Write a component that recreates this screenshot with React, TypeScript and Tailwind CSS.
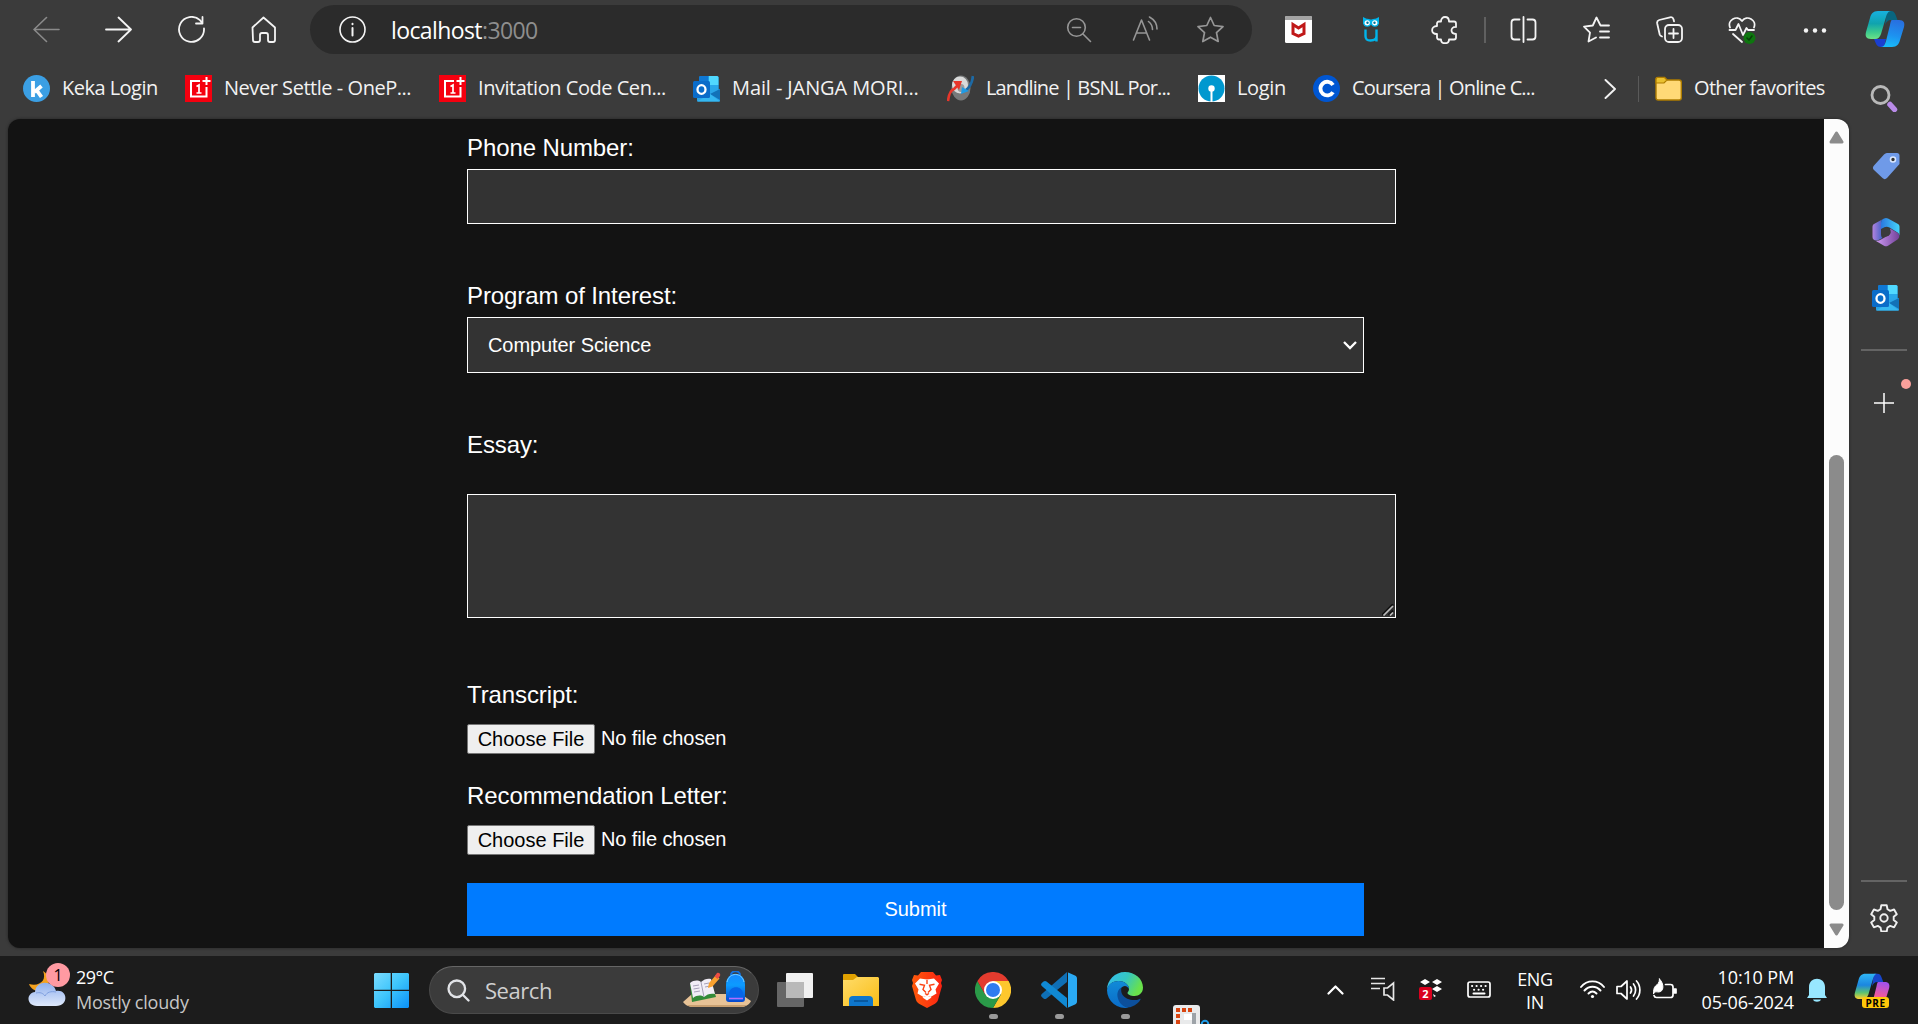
import React from "react";

const ui = "font-['Open_Sans','Noto_Sans',sans-serif]";
const line = { fill: "none", stroke: "currentColor", strokeLinecap: "round" as const, strokeLinejoin: "round" as const };

function OnePlus() {
  return (
    <svg className="size-[27px]" viewBox="0 0 27 27">
      <rect width="27" height="27" fill="#f5000f" />
      <path d="M15 6H6v15.500h15.500V12" fill="none" stroke="#fff" strokeWidth="2" />
      <path d="M21.500 2v8M17.500 6h8" fill="none" stroke="#fff" strokeWidth="2" />
      <path d="M11.500 11.500l2.500-1.500v8M11.500 18h5" fill="none" stroke="#fff" strokeWidth="1.700" />
    </svg>
  );
}

function Outlook() {
  return (
    <svg className="size-[27px]" viewBox="0 0 27 27">
      <path d="M6 2.500Q6 1 7.500 1H24q1.500 0 1.500 1.500V15H6z" fill="#1490df" />
      <path d="M15.500 1H24q1.500 0 1.500 1.500V10h-10z" fill="#50d9ff" />
      <path d="M6 2.500Q6 1 7.500 1h8v9H6z" fill="#0f78d4" />
      <path d="M15.500 10h10v6h-10z" fill="#28a8ea" />
      <path d="M4 18l23-4v11.500q0 1-1 1H5q-1 0-1-1z" fill="#2aa5e8" />
      <path d="M27 14v11L17 19z" fill="#1272b8" />
      <path d="M4 26.500L17 19l10 7.500z" fill="#35b8f1" />
      <rect y="6" width="17" height="17" rx="1.500" fill="#0a6cc9" />
      <ellipse cx="8.500" cy="14.500" rx="4" ry="4.300" fill="none" stroke="#fff" strokeWidth="2.300" />
    </svg>
  );
}

function Keka() {
  return (
    <svg className="size-[27px]" viewBox="0 0 27 27">
      <circle cx="13.500" cy="13.500" r="13.500" fill="#3b9fe4" />
      <path d="M10 6v16M18.500 11l-7 6M13.500 15l5 7" fill="none" stroke="#fff" strokeWidth="3.800" />
    </svg>
  );
}

function Landline() {
  return (
    <svg className="size-[27px]" viewBox="0 0 27 27">
      <ellipse cx="14" cy="13" rx="9.500" ry="12.500" fill="#77797a" />
      <ellipse cx="13" cy="10" rx="8" ry="8.500" fill="#d9dada" />
      <ellipse cx="14" cy="13" rx="3.500" ry="4" fill="#9a9c9d" />
      <path d="M1 26c1-8 3-11 6-12l4-4" fill="none" stroke="#e8362b" strokeWidth="2.600" />
      <path d="M6 6l9 0-3 9z" fill="#e8362b" />
      <path d="M26 1c-1 8-3 11-7 14" fill="none" stroke="#1d6aa5" strokeWidth="2.800" />
      <path d="M15 12l-1 7 8-3z" fill="#1e9be6" />
    </svg>
  );
}

function Sbi() {
  return (
    <svg className="size-[27px]" viewBox="0 0 27 27">
      <rect width="27" height="27" fill="#fff" />
      <circle cx="13.500" cy="13.500" r="13" fill="#0098cf" />
      <circle cx="13.500" cy="13.500" r="3.200" fill="#fff" />
      <path d="M12.500 15h2v12h-2z" fill="#fff" />
    </svg>
  );
}

function Coursera() {
  return (
    <svg className="size-[27px]" viewBox="0 0 27 27">
      <circle cx="13.500" cy="13.500" r="13.500" fill="#0056d2" />
      <path d="M20 10a6.800 6.800 0 1 0 0 7.200" fill="none" stroke="#fff" strokeWidth="3.900" />
    </svg>
  );
}

function CopilotMark({ pre = false }: { pre?: boolean }) {
  const id = pre ? "p" : "c";
  return (
    <svg className={pre ? "size-[36px]" : "size-[40px]"} viewBox="0 0 40 40">
      <defs>
        <linearGradient id={id + "a"} x1="0" y1="0" x2="0" y2="1">
          <stop offset="0" stopColor={pre ? "#2fb6f5" : "#17b1e0"} />
          <stop offset="0.450" stopColor={pre ? "#1b86e0" : "#10a3ae"} />
          <stop offset="0.750" stopColor={pre ? "#5cc271" : "#3bc98f"} />
          <stop offset="1" stopColor={pre ? "#ffd02e" : "#6be387"} />
        </linearGradient>
        <linearGradient id={id + "b"} x1="0.500" y1="0" x2="0.300" y2="1">
          <stop offset="0" stopColor={pre ? "#a452ea" : "#2870e0"} />
          <stop offset="0.550" stopColor={pre ? "#f0589c" : "#1d92f0"} />
          <stop offset="1" stopColor={pre ? "#ff9a5a" : "#18bdfa"} />
        </linearGradient>
      </defs>
      <path d="M22 2h4c3 0 4 2 5 5l1.500 4H26c-3 0-5 2-6 5z" fill={pre ? "#1745c9" : "#08657f"} />
      <path d="M9 30h12l-2 8h-3c-4 0-5-3-7-8z" fill={pre ? "#e69c21" : "#1a3fd0"} />
      <path d="M13 2h13c-3 0-4 3-5 6l-5 17c-1 3-3 5-6 5H6c-5 0-6-3-5-7L5 9c1-4 3-7 8-7z" fill={"url(#" + id + "a)"} />
      <path d="M27 11h7c5 0 6 3 5 7l-4 13c-1 4-3 7-8 7H16c3 0 4-3 5-6l4-16c.500-3 1-5 2-5z" fill={"url(#" + id + "b)"} />
    </svg>
  );
}

function Bookmark({ icon, text, w, track }: { icon: React.ReactNode; text: string; w: string; track: string }) {
  return (
    <div className={"flex shrink-0 items-center gap-[12px] " + w}>
      {icon}
      <span className={"whitespace-nowrap pb-px text-[20px] leading-[28px] " + track}>{text}</span>
    </div>
  );
}

function Toolbar() {
  return (
    <div className="flex h-[59px] shrink-0 items-center text-[#f4f4f4]">
      <svg className="ml-[33px] size-[27px] shrink-0 text-[#8a8a8a]" viewBox="0 0 27 27" {...line} strokeWidth="1.600"><path d="M26 13.500H1M13.500 1.500L1 13.500l12.500 12" /></svg>
      <svg className="ml-[45px] size-[27px] shrink-0" viewBox="0 0 27 27" {...line} strokeWidth="1.800"><path d="M1 13.500h25M13.500 1.500L26 13.500l-12.500 12" /></svg>
      <svg className="ml-[46px] size-[27px] shrink-0" viewBox="0 0 27 27" {...line} strokeWidth="1.800"><path d="M26 12.500A12.500 12.500 0 1 1 22 4.200l2 2.500M24.500 1v6.500H18" /></svg>
      <svg className="ml-[45px] size-[27px] shrink-0" viewBox="0 0 27 27" {...line} strokeWidth="1.800"><path d="M2.500 11.500L13.500 1.500l11.500 10V24c0 1.200-.8 2-2 2h-3c-1.200 0-2-.8-2-2v-5c0-1.200-.8-2-2-2h-4c-1.200 0-2 .8-2 2v5c0 1.200-.8 2-2 2h-3c-1.200 0-2-.8-2-2z" /></svg>
      <div className="ml-[33px] flex h-[49px] w-[942px] shrink-0 items-center rounded-full bg-[#2b2b2b]">
        <svg className="ml-[29px] size-[27px] shrink-0" viewBox="0 0 27 27" {...line} strokeWidth="1.600"><circle cx="13.500" cy="13.500" r="12.500" /><path d="M13.500 12v7.500M13.500 7.800v.4" strokeWidth="2" /></svg>
        <div className="ml-[25px] w-[200px] whitespace-nowrap text-[23px] leading-[30px] tracking-[-0.600px] text-white">localhost<span className="text-[#8e8e8e]">:3000</span></div>
        <svg className="ml-[475px] size-[26px] shrink-0 text-[#969696]" viewBox="0 0 26 26" {...line} strokeWidth="1.600"><circle cx="10.500" cy="10.500" r="8.800" /><path d="M17 17l7.500 7.500M6.500 10.500h8" /></svg>
        <svg className="ml-[40px] size-[27px] shrink-0 text-[#969696]" viewBox="0 0 27 27" {...line} strokeWidth="1.600"><path d="M1.500 24L9.500 4l8 20M4.500 17h10M16.500 5.500c2.500 2 4 5 4 8M17.500 1c4.500 2.500 7.500 7 7.500 12" /></svg>
        <svg className="ml-[38px] size-[27px] shrink-0 text-[#969696]" viewBox="0 0 27 27" {...line} strokeWidth="1.700"><path d="M13.500 1.500l3.700 8 8.800 1.100-6.500 6 1.700 8.900-7.700-4.300-7.700 4.300 1.700-8.900-6.500-6 8.800-1.100z" /></svg>
      </div>
      <svg className="ml-[33px] size-[27px] shrink-0" viewBox="0 0 27 27"><rect width="27" height="27" rx="1.500" fill="#fff" /><path d="M0 1.500Q0 0 1.500 0h24Q27 0 27 1.500V4H0z" fill="#a3a3a3" /><path d="M8 8.500l5.500 3.500L19 8.500v9L13.500 20 8 17.500z" fill="none" stroke="#c01818" strokeWidth="3" /></svg>
      <svg className="ml-[49px] h-[27px] w-5 shrink-0" viewBox="0 0 20 27"><path d="M2 1l5 2.500h6L18 1v7H2z" fill="#00b4ea" /><g fill="#fff" stroke="#00b4ea" strokeWidth="1.300"><circle cx="6.200" cy="6.800" r="3.300" /><circle cx="13.800" cy="6.800" r="3.300" /></g><circle cx="6.500" cy="6.800" r="1.200" fill="#00749c" /><circle cx="13.500" cy="6.800" r="1.200" fill="#00749c" /><path d="M4.500 13.500V20c0 4 2 4.500 5 4.500s6-1 6-4.500v-6.500M15.500 20v5.500" fill="none" stroke="#00b4ea" strokeWidth="2.400" /></svg>
      <svg className="ml-[49px] size-[28px] shrink-0" viewBox="0 0 28 28" {...line} strokeWidth="1.800"><path d="M9 5.500h2c0-6 8-6 8 0h5c1 0 2 .7 2 2V11c-6-.5-6 7 0 7v3.500c0 1-.7 2-2 2h-5c0 5-8 5-8 0H9c-1.300 0-2-1-2-2V18c-6.500.5-6.500-8 0-8V7.500c0-1.300.7-2 2-2z" /></svg>
      <div className="ml-[26px] h-[26px] w-[2px] shrink-0 bg-[#606060]" />
      <svg className="ml-[24px] size-[27px] shrink-0" viewBox="0 0 27 27" {...line} strokeWidth="1.800"><path d="M13.500 1v25M9.500 3.500h-5c-2 0-3 1-3 3v14c0 2 1 3 3 3h5M17.500 3.500h5c2 0 3 1 3 3v14c0 2-1 3-3 3h-5" /></svg>
      <svg className="ml-[46px] size-[27px] shrink-0" viewBox="0 0 27 27" {...line} strokeWidth="1.800"><path d="M26 9.500h-8.500L13.500 1.500l-3.700 8L1 10.600l6 6L5.500 25.500l7.500-4M17 15.500h9M17 21.500h9" /></svg>
      <svg className="ml-[46px] size-[27px] shrink-0" viewBox="0 0 27 27" {...line} strokeWidth="1.800"><rect x="9" y="9" width="17" height="17" rx="4" /><path d="M17.500 13v9M13 17.500h9M6 20.500c-1.500-.5-2-1-2.300-2L1.200 7.500c-.4-2 .3-3 2-3.500L14 1.300c1.800-.4 3 .2 3.500 2l.5 2" /></svg>
      <svg className="ml-[45px] size-[28px] shrink-0" viewBox="0 0 28 28" {...line} strokeWidth="1.800"><path d="M2 11.500C-1 4 9-1.500 14 5c5-6.500 15-1 12 6.500M1.500 14h6l3-6 4.500 11 3.500-7 1.500 2h6M5 18l9 8" /><circle cx="21.500" cy="22" r="6" fill="#0e760f" stroke="none" /><path d="M19 22l2 2 3-4" stroke="#083f08" strokeWidth="1.500" /></svg>
      <svg className="ml-[47px] size-[24px] shrink-0" viewBox="0 0 24 24" fill="currentColor"><circle cx="3" cy="12.500" r="2.200" /><circle cx="12" cy="12.500" r="2.200" /><circle cx="21" cy="12.500" r="2.200" /></svg>
    </div>
  );
}

function Bookmarks() {
  return (
    <div className="flex h-[59px] shrink-0 items-center pl-[23px] text-[#f2f2f2]">
      <Bookmark icon={<Keka />} text="Keka Login" w="w-[162px]" track="tracking-[-0.520px]" />
      <Bookmark icon={<OnePlus />} text="Never Settle - OneP..." w="w-[254px]" track="tracking-[-0.460px]" />
      <Bookmark icon={<OnePlus />} text="Invitation Code Cen..." w="w-[254px]" track="tracking-[-0.460px]" />
      <Bookmark icon={<Outlook />} text="Mail - JANGA MORI..." w="w-[254px]" track="tracking-[-0.100px]" />
      <Bookmark icon={<Landline />} text="Landline | BSNL Por..." w="w-[251px]" track="tracking-[-0.880px]" />
      <Bookmark icon={<Sbi />} text="Login" w="w-[115px]" track="tracking-[-0.350px]" />
      <Bookmark icon={<Coursera />} text="Coursera | Online C..." w="w-[291px]" track="tracking-[-0.860px]" />
      <svg className="h-5 w-3 shrink-0" viewBox="0 0 12 20" {...line} strokeWidth="1.900"><path d="M1.500 1L11 10l-9.500 9" /></svg>
      <div className="ml-[22px] h-[26px] w-px shrink-0 bg-[#5a5a5a]" />
      <div className="ml-[16px] flex items-center gap-[12px]">
        <svg className="size-[27px]" viewBox="0 0 27 27"><path d="M1 4.500C1 3 1.800 2.500 3 2.500h6.500L12 5h12c1.500 0 2.300.8 2.300 2.300v15.400c0 1.500-.8 2.300-2.300 2.300H3.300C1.800 25 1 24.200 1 22.700z" fill="#ffd976" stroke="#ae7c00" strokeWidth="1.400" /><path d="M1 4.500C1 3 1.800 2.500 3 2.500h6.500L12 5 9 8H1z" fill="#eac130" stroke="#ae7c00" strokeWidth="1.200" /></svg>
        <span className="whitespace-nowrap pb-px text-[20px] leading-[28px] tracking-[-0.660px]">Other favorites</span>
      </div>
    </div>
  );
}

function Label({ children, className }: { children: React.ReactNode; className: string }) {
  return <label className={"block text-[24px] leading-[28px] tracking-[-0.100px] text-white " + className}>{children}</label>;
}

function FileRow({ className }: { className: string }) {
  return (
    <div className={"flex h-[30px] items-center text-[20px] leading-[24px] text-white " + className}>
      <button className="flex h-[30px] w-[128px] items-center justify-center rounded-[2px] border border-[#767676] bg-[#efefef] pb-px text-black">Choose File</button>
      <span className="ml-[6px] pb-[3px] tracking-[-0.100px]">No file chosen</span>
    </div>
  );
}

function Form() {
  return (
    <form className="ml-[459px] w-[929px] font-['Liberation_Sans',Arial,sans-serif]">
      <Label className="mt-[15px]">Phone Number:</Label>
      <div className="mt-[7px] h-[55px] border border-white bg-[#333]" />
      <Label className="mt-[58px]">Program of Interest:</Label>
      <div className="mt-[7px] flex h-[56px] w-[897px] items-center justify-between border border-white bg-[#333] pr-[6px] pl-[20px] text-[20px] tracking-[-0.080px] text-white">
        Computer Science
        <svg className="h-[9px] w-[14px]" viewBox="0 0 14 9" fill="none" stroke="#fff" strokeWidth="2.300"><path d="M1 1l6 6 6-6" /></svg>
      </div>
      <Label className="mt-[58px]">Essay:</Label>
      <div className="mt-[35px] flex h-[124px] items-end justify-end border border-white bg-[#333] p-px">
        <svg className="size-[12px]" viewBox="0 0 12 12" fill="none"><path d="M0 11L11 0M6.500 11L11 6.500" stroke="#111" strokeWidth="1.800" /><path d="M1.500 11.500L11 2M8 11.500l3-3" stroke="#bbb" strokeWidth="1.700" /></svg>
      </div>
      <Label className="mt-[63px]">Transcript:</Label>
      <FileRow className="mt-[15px]" />
      <Label className="mt-[28px]">Recommendation Letter:</Label>
      <FileRow className="mt-[15px]" />
      <button className="mt-[28px] flex h-[53px] w-[897px] items-center justify-center bg-[#007bff] pb-px text-[20px] text-white">Submit</button>
    </form>
  );
}

function Sidebar() {
  return (
    <div className="flex h-[956px] w-[69px] flex-col items-center pl-[2px]">
      <div className="mt-[9px] h-10"><CopilotMark /></div>
      <svg className="mt-[35px] mr-px size-[28px]" viewBox="0 0 28 28"><circle cx="10.500" cy="11" r="8.500" fill="none" stroke="#b9b9b9" strokeWidth="2.800" /><path d="M20 20.500l4.500 5" stroke="#b98be8" strokeWidth="5.500" strokeLinecap="round" /></svg>
      <svg className="mt-[40px] ml-[2px] size-[28px]" viewBox="0 0 28 28"><path d="M16 1h9c1.500 0 2.500 1 2.500 2.500V12L15 26c-1.500 1.500-3 1.500-4.500 0L2 18c-1.500-1.500-1.500-3 0-4.500L12 2.500C13.500 1 14.500 1 16 1z" fill="#6f9ae8" /><circle cx="21" cy="7.500" r="2.500" fill="#333" stroke="#dbe8ff" strokeWidth="1.600" /></svg>
      <svg className="mt-[37px] ml-[2px] size-[30px]" viewBox="0 0 30 30">
        <defs>
          <linearGradient id="m1"><stop stopColor="#b283df" /><stop offset="1" stopColor="#315cc4" /></linearGradient>
          <linearGradient id="m2"><stop stopColor="#2b78e0" /><stop offset="1" stopColor="#44d5fb" /></linearGradient>
          <linearGradient id="m3"><stop stopColor="#ce9bf4" /><stop offset="1" stopColor="#734199" /></linearGradient>
        </defs>
        <path d="M13 1.500L3 7c-1 .6-1.500 1.500-1.500 3v10c0 3 3 4.500 6 3l4-2c-1-1-1.500-2-1.500-4V6c0-2 1-4 3-4.500z" fill="url(#m1)" />
        <path d="M13 1.500c1.500-.8 2.500-.8 4 0L27 7c1 .6 1.500 1.500 1.500 3v9c0-1.500-1-3-2-3.500l-8-5c-2-1.200-4-1-5.500 0L10 12V6c0-2 1-4 3-4.500z" fill="url(#m2)" />
        <path d="M5 24c2 0 4-1 6-2l7-4c2-1 2-3 1-6.500l7 4c3 2 3 5 .5 7L17 28.700c-1.500.8-2.500.8-4 0z" fill="url(#m3)" />
        <circle cx="14.800" cy="15" r="4.500" fill="#3b3b3b" />
      </svg>
      <div className="mt-[37px] ml-[2px]"><Outlook /></div>
      <div className="mt-[38px] mr-[2px] h-[2px] w-[46px] bg-[#646464]" />
      <div className="relative mt-[41px] mr-[2px] size-[22px]">
        <svg className="size-[22px]" viewBox="0 0 22 22" stroke="#fff" strokeWidth="1.500"><path d="M11 1v20M1 11h20" /></svg>
        <span className="absolute top-[-13px] left-[28px] size-[10px] rounded-full bg-[#fba09b]" />
      </div>
      <div className="mt-auto mr-[2px] h-[2px] w-[46px] bg-[#646464]" />
      <svg className="mt-[22px] mr-px mb-[24px] size-[28px] text-[#f0f0f0]" viewBox="0 0 28 28" {...line} strokeWidth="1.900"><circle cx="14" cy="14" r="3.700" /><path d="M11.300 1.300h5.400l.8 4 2.700 1.600 3.900-1.400 2.700 4.700-3.100 2.600v3.200l3.100 2.600-2.700 4.700-3.900-1.400-2.700 1.600-.8 4h-5.400l-.8-4-2.700-1.600-3.900 1.400-2.700-4.700 3.100-2.600v-3.200l-3.100-2.600 2.700-4.700 3.900 1.400 2.700-1.600z" /></svg>
    </div>
  );
}

function Scrollbar() {
  return (
    <div className="flex h-[829px] w-[25px] flex-col items-center bg-[#fcfcfc]">
      <svg className="mt-[12px] h-[13px] w-[15px] shrink-0" viewBox="0 0 15 13"><path d="M7.500 2L13 11H2z" fill="#8b8b8b" stroke="#8b8b8b" strokeWidth="3" strokeLinejoin="round" /></svg>
      <div className="mt-[311px] h-[455px] w-[15px] rounded-full bg-[#8b8b8b]" />
      <svg className="mt-[13px] h-[13px] w-[15px] shrink-0" viewBox="0 0 15 13"><path d="M7.500 11L13 2H2z" fill="#8b8b8b" stroke="#8b8b8b" strokeWidth="3" strokeLinejoin="round" /></svg>
    </div>
  );
}

function AppIcon({ children, className, running }: { children: React.ReactNode; className: string; running?: boolean }) {
  return (
    <div className={"relative size-[36px] shrink-0 " + className}>
      {children}
      {running && <span className="absolute top-[42px] left-[14px] h-[5px] w-[9px] rounded-full bg-[#9a9a9a]" />}
    </div>
  );
}

function SearchArt() {
  return (
    <svg className="h-[38px] w-[68px] shrink-0" viewBox="0 0 68 38">
      <defs><linearGradient id="bag" x1="0" y1="0" x2="0" y2="1"><stop stopColor="#1789ff" /><stop offset="0.400" stopColor="#0c9bff" /><stop offset="1" stopColor="#0647cf" /></linearGradient></defs>
      <path d="M0 31l9-8h49l10 7c-2 4-6 6-11 6H11c-5 0-9-2-11-5z" fill="#e7c296" />
      <path d="M4 34h60c-2 1.500-4 2-7 2H11c-3 0-5-.5-7-2z" fill="#c89f70" />
      <path d="M7 13l2 18 24-5-5-16z" fill="#338b38" />
      <path d="M7 12c4-3 8-3 11-1 3-3 7-4 10-3l4 15c-4-1-8 0-11 3-3-2-7-2-11 1z" fill="#f1edf6" />
      <path d="M18 11l3 15M10 15l6-1M10.500 18l6-1M11 21l6-1M21 13l5-1M22 16l5-1" stroke="#a6a0b8" strokeWidth="1" fill="none" />
      <path d="M25 17l1-5 7-8 3.500 3.500-7 8z" fill="#f9a12e" /><path d="M31.500 5.500L34 2c2-1 4 1 3 3l-2.500 3z" fill="#ed4d43" />
      <path d="M48 4c0-5 9-5 9 0" fill="none" stroke="#1271e0" strokeWidth="2" />
      <path d="M43 14c0-15 19-15 19 0v14c0 2-1 3-3 3H46c-2 0-3-1-3-3z" fill="url(#bag)" />
      <path d="M44 11c2-10 15-10 17 0" fill="none" stroke="#7ad2ff" strokeWidth="1" />
      <path d="M46 29v-6c0-9 14-9 14 0v6z" fill="#0865e8" /><path d="M46 27.500h14" stroke="#b56cff" strokeWidth="1.500" />
    </svg>
  );
}

function Taskbar() {
  return (
    <div className="flex h-[68px] items-start bg-[#1c1c1c] text-white">
      <div className="relative mt-[13px] ml-[28px] h-[40px] w-[42px] shrink-0">
        <svg className="h-[40px] w-[42px]" viewBox="0 0 42 40">
          <defs><linearGradient id="cl" x1="0" y1="0" x2="0" y2="1"><stop stopColor="#8fb0ee" /><stop offset="1" stopColor="#dfe9fb" /></linearGradient></defs>
          <path d="M15 2c4 9-3 16-14 13 3 8 12 9 17 4s3-14-3-17z" fill="#f4a21f" />
          <path d="M9 37c-11 0-11-13-2-14 1-12 18-12 21-1 12-2 13 15 0 15z" fill="url(#cl)" />
          <path d="M8 24c4-1 7 0 9 3 2-4 6-5 11-4" fill="none" stroke="#7f9fe0" strokeWidth="1" />
        </svg>
        <span className="absolute top-[-6px] left-[18px] flex size-[24px] items-center justify-center rounded-full bg-[#ff9aa2] text-[16px] leading-none text-black">1</span>
      </div>
      <div className="ml-[6px] w-[230px] shrink-0 pt-[9px] text-[18px] leading-[24.500px]">
        <div className="tracking-[-0.500px]">29°C</div>
        <div className="tracking-[-0.200px] text-[#c6c6c6]">Mostly cloudy</div>
      </div>
      <svg className="mt-[17px] ml-[68px] size-[35px] shrink-0" viewBox="0 0 35 35">
        <defs><linearGradient id="win" x1="0" y1="0" x2="1" y2="1"><stop stopColor="#7bdcff" /><stop offset="0.500" stopColor="#3cc4fb" /><stop offset="1" stopColor="#0a90f8" /></linearGradient></defs>
        <path d="M1 0h15.700v16.700H0V1zM18 0h16l1 1v15.700H18zM0 18h16.700v17H1l-1-1zM18 18h17v16l-1 1H18z" fill="url(#win)" />
      </svg>
      <div className="mt-[10px] ml-[20px] flex h-[48px] w-[330px] shrink-0 items-center rounded-full border border-[#4a4a4a] border-t-[#666] bg-[#3b3b3b]">
        <svg className="ml-[17px] size-[23px] shrink-0" viewBox="0 0 23 23" fill="none" stroke="#e2e4e8" strokeWidth="2.300" strokeLinecap="round"><circle cx="9.800" cy="9.800" r="8.300" fill="#565656" /><path d="M16 16l5.500 5.500" /></svg>
        <span className="ml-[15px] w-[198px] text-[22px] leading-[30px] tracking-[-0.450px] text-[#cfcfcf]">Search</span>
        <SearchArt />
      </div>
      <AppIcon className="mt-[16px] ml-[18px]">
        <svg className="size-[36px]" viewBox="0 0 36 36"><rect x="9" y="1" width="27" height="25" rx="1" fill="#f0f0f0" /><rect y="10" width="27" height="25" rx="1" fill="#666" /><path d="M9 10h18v16H9z" fill="#b9b9b9" /></svg>
      </AppIcon>
      <AppIcon className="mt-[16px] ml-[30px]">
        <svg className="size-[36px]" viewBox="0 0 36 36">
          <defs><linearGradient id="fo" x1="0" y1="0" x2="1" y2="1"><stop stopColor="#ffdc6a" /><stop offset="1" stopColor="#f9bd16" /></linearGradient></defs>
          <path d="M0 3q0-1 1-1h11l3 3v5H0z" fill="#e0a100" /><path d="M0 8h10l4-3h21l1 1v28H0z" fill="url(#fo)" /><path d="M6 34v-6q0-4 4-4h16q4 0 4 4v6z" fill="#0e76cc" /><path d="M11 29h14" stroke="#064f91" strokeWidth="1.500" />
        </svg>
      </AppIcon>
      <AppIcon className="mt-[16px] ml-[30px]">
        <svg className="size-[36px]" viewBox="0 0 36 36">
          <defs><linearGradient id="br"><stop stopColor="#ff5a0b" /><stop offset="1" stopColor="#fb2312" /></linearGradient></defs>
          <path d="M12 0h12l3 3.500 4-.5 2 5-1 3 1 3-4 14c-.5 2-2 3-3 3.700L18 36l-8-4.300c-1-.7-2.500-1.700-3-3.700L3 14l1-3-1-3 2-5 4 .5z" fill="url(#br)" />
          <path d="M11 6.500l7 1 7-1 5 5-3.500 6 1 4-6 3.500-3.500-1.500-3.500 1.500-6-3.500 1-4L6 11.500z" fill="#fff" />
          <path d="M10.500 12.300l5 1-1.500 4.200 3 3M25.500 12.300l-5 1 1.500 4.200-3 3M18 8v4M16 21.500l2 1.200 2-1.200" fill="none" stroke="#fb4212" strokeWidth="1.400" />
          <path d="M13.500 25.500l4.500-2 4.500 2-4.500 3z" fill="#fff" />
        </svg>
      </AppIcon>
      <AppIcon className="mt-[16px] ml-[30px]" running>
        <svg className="size-[36px]" viewBox="0 0 36 36">
          <path d="M18 9h15.600A18 18 0 0 1 18 36l7.800-13.500z" fill="#fdc72d" />
          <path d="M2.400 9l7.800 13.500L25.800 22.500 18 36A18 18 0 0 1 2.400 9z" fill="#2a9a48" />
          <path d="M33.600 9H18l-7.800 13.500L2.400 9a18 18 0 0 1 31.200 0z" fill="#e33b2e" />
          <circle cx="18" cy="18" r="9" fill="#fff" /><circle cx="18" cy="18" r="7" fill="#2f7cf0" />
        </svg>
      </AppIcon>
      <AppIcon className="mt-[16px] ml-[30px]" running>
        <svg className="size-[36px]" viewBox="0 0 36 36">
          <path d="M26 0v10L5.500 26.500c-1 .8-2 .7-3 0L.8 25c-1-1-1-2 0-3z" fill="#0f6fb5" />
          <path d="M26 36V26L5.500 9.500c-1-.8-2-.7-3 0L.8 11c-1 1-1 2 0 3z" fill="#1089d3" />
          <path d="M26 0l8 3.500c1.300.6 2 1.500 2 3v23c0 1.500-.7 2.400-2 3L26 36c1 0 1-.7 1-1.500V2c0-1 0-2-1-2z" fill="#2aa9f3" />
        </svg>
      </AppIcon>
      <AppIcon className="mt-[16px] ml-[30px]" running>
        <svg className="size-[36px]" viewBox="0 0 36 36">
          <defs>
            <linearGradient id="e1" x1="0" y1="0" x2="1" y2="0.400"><stop stopColor="#34bdf5" /><stop offset="0.550" stopColor="#35c6c0" /><stop offset="1" stopColor="#69e14b" /></linearGradient>
            <linearGradient id="e2" x1="0" y1="0" x2="0" y2="1"><stop stopColor="#118bd8" /><stop offset="1" stopColor="#0a6bc8" /></linearGradient>
          </defs>
          <path d="M18 0c10 0 18 7 18 15.500 0 5.500-4 8.500-8.500 8.500-4 0-7-1.500-7-3 0-1 1.500-1.500 1.500-4 0-4.500-5-8-10.500-8C5 9 1 13 0 18 0 8 8 0 18 0z" fill="url(#e1)" />
          <path d="M0 18C1 12 6 9 11.500 9 17 9 22 12.500 22 17c0 0-1.500-3-4-3-3.500 0-6 4-6 9 0 6 4 12 10 12.500A18 18 0 0 1 0 18z" fill="url(#e2)" />
          <path d="M14.500 15.500c-4 2-5 7-3.500 11C13 34 20 37 25 34.500c4-1.500 7-4 8.500-7 .3-.8-.3-1-1-.6-5 2.600-14 1-17.500-5-1-2-1-4.500-.5-6.400z" fill="#0c4f9b" />
        </svg>
      </AppIcon>
      <svg className="mt-[49px] ml-[30px] h-[19px] w-[37px] shrink-0" viewBox="0 0 37 19"><path d="M0 19V3q0-3 3-3h21q3 0 3 3v16z" fill="#e9eaeb" /><path d="M3 3h4v4H3zM9 3h4v4H9zM15 3h4v4h-4zM3 9h4v4H3zM3 15h4v4H3z" fill="#d9440f" /><path d="M11 9h8v6h-8z" fill="#fff" /><path d="M19 8h4v11h-4z" fill="#9da3a8" /><circle cx="32" cy="19" r="3.300" fill="none" stroke="#1e9ce8" strokeWidth="2" /></svg>
      <svg className="mt-[28px] ml-[117px] h-[11px] w-[17px] shrink-0" viewBox="0 0 17 11" {...line} strokeWidth="2.200"><path d="M1.500 9.500l7-7 7 7" /></svg>
      <svg className="mt-[21px] ml-[27px] size-[24px] shrink-0" viewBox="0 0 24 24" fill="none" stroke="#e6e6e6" strokeWidth="1.700"><path d="M0 1.500h14M0 6.500h14M0 11.500h9M13 11h3.500l6-5v17l-6-5H13z" /></svg>
      <svg className="mt-[22px] ml-[24px] size-[24px] shrink-0" viewBox="0 0 24 24"><path d="M1 4l5-3 5 3-5 3zM13 4l5-3 5 3-5 3zM13 11l5-3 5 3-5 3zM14 16l3 2-2 1z" fill="#fff" /><rect y="9" width="13" height="13" rx="2" fill="#d9001e" /><text x="6.500" y="19.800" fill="#fff" fontSize="11" fontWeight="700" textAnchor="middle">2</text></svg>
      <svg className="mt-[25px] ml-[24px] h-[17px] w-[24px] shrink-0" viewBox="0 0 24 17" {...line} strokeWidth="1.700"><rect x="1" y="1" width="22" height="15" rx="2" /><path d="M5 5h.2M9.500 5h.2M14 5h.2M18.500 5h.2M7 8.700h.2M11.500 8.700h.2M16 8.700h.2M6.500 12.500h11" strokeWidth="2" /></svg>
      <div className="ml-[20px] w-[48px] shrink-0 pt-[12px] text-center text-[18px] leading-[23px] tracking-[-0.400px]">ENG<br />IN</div>
      <svg className="mt-[24px] ml-[21px] h-[19px] w-[25px] shrink-0" viewBox="0 0 25 19" {...line} strokeWidth="1.900"><path d="M1 7c6-7.500 17-7.500 23 0M4.500 10.500c4.500-5 11.500-5 16 0M8.500 13.500c2.500-2.500 5.500-2.500 8 0" /><circle cx="12.500" cy="16.500" r="1.600" fill="#fff" stroke="none" /></svg>
      <svg className="mt-[23px] ml-[11px] h-[22px] w-[25px] shrink-0" viewBox="0 0 25 22" {...line} strokeWidth="1.700"><path d="M1 7.500h4L11 2v18l-6-5.500H1zM14.500 8c1.200 1.700 1.200 4.300 0 6M17.500 5c2.800 3.500 2.800 8.500 0 12M20.500 2c4.500 5 4.500 13 0 18" /></svg>
      <svg className="mt-[22px] ml-[11px] h-[22px] w-[25px] shrink-0" viewBox="0 0 25 22" {...line} strokeWidth="1.700"><path d="M13.500 6.500h5q2.500 0 2.500 2.500v8q0 2.500-2.500 2.500h-14q-2 0-2.500-2" /><path d="M22 11h2v4h-2z" fill="#fff" /><path d="M7.500 1c5 5 4.500 13-1 13-2 0-3.500-1-5 2 0-3 0-6 2-8 2-1.500 4-3 4-7z" fill="#fff" strokeWidth="1" /></svg>
      <div className="ml-[7px] w-[110px] shrink-0 pt-[9px] text-right text-[18px] leading-[24.500px] tracking-[-0.150px] whitespace-nowrap">10:10 PM<br />05-06-2024</div>
      <svg className="mt-[22px] ml-[13px] h-[25px] w-[20px] shrink-0" viewBox="0 0 20 25"><path d="M2 17V9C2-2 18-2 18 9v8l2 3H0zM6 21.500h8c-1 3-7 3-8 0z" fill="#98e7ff" /></svg>
      <div className="relative mt-[16px] ml-[27px] size-[36px] shrink-0">
        <CopilotMark pre />
        <span className="absolute top-[25px] left-[8px] flex h-[11px] w-[27px] items-center justify-center rounded-[3px] bg-[#ffc80a] text-[10px] leading-none font-bold tracking-[0.500px] text-black">PRE</span>
      </div>
    </div>
  );
}

export default function App() {
  return (
    <div className={"flex h-[1024px] w-[1918px] flex-col overflow-hidden bg-[#3b3b3b] " + ui}>
      <div className="flex h-[956px] shrink-0">
        <div className="flex w-[1849px] shrink-0 flex-col">
          <Toolbar />
          <Bookmarks />
          <div className="mt-px ml-[8px] flex h-[829px] w-[1841px] overflow-hidden rounded-[12px] bg-[#131313] shadow-[0_0_3px_#222]">
            <div className="w-[1816px] shrink-0"><Form /></div>
            <Scrollbar />
          </div>
        </div>
        <Sidebar />
      </div>
      <Taskbar />
    </div>
  );
}
